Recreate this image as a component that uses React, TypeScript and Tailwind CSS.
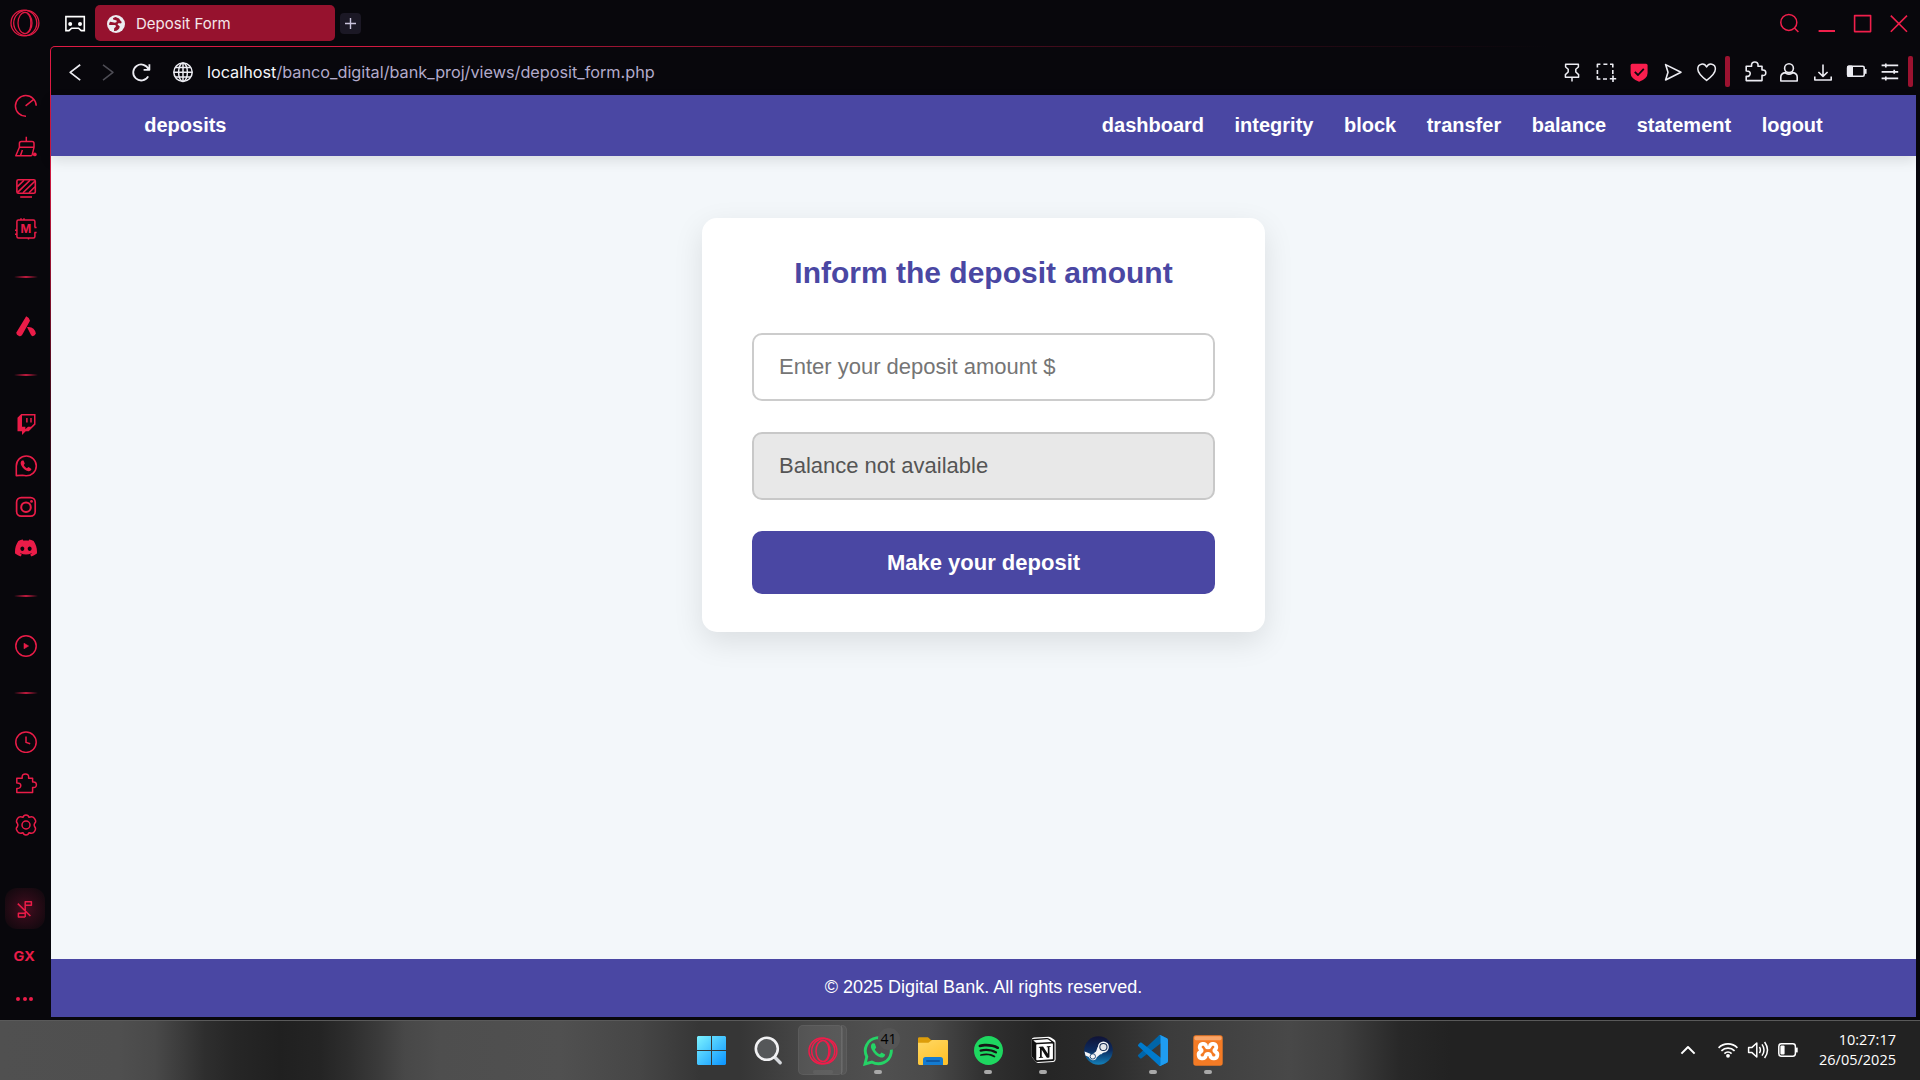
import React from "react";
import type { ReactNode } from "react";
import { SiTwitch, SiDiscord, SiSpotify, SiNotion } from "react-icons/si";

type IconProps = { children: ReactNode; size?: number; sw?: number; className?: string };

function Icon({ children, size = 24, sw = 1.5, className = "" }: IconProps) {
  return (
    <svg
      width={size}
      height={size}
      viewBox={`0 0 ${size} ${size}`}
      fill="none"
      stroke="currentColor"
      strokeWidth={sw}
      strokeLinejoin="round"
      className={`block shrink-0 ${className}`}
    >
      {children}
    </svg>
  );
}

function OperaLogo({ sw = 1.3 }: { sw?: number }) {
  return (
    <Icon size={30} sw={sw}>
      <circle cx="13.9" cy="15" r="12.9" />
      <circle cx="16.3" cy="15" r="12.6" />
      <ellipse cx="15" cy="15" rx="7" ry="10.6" />
      <path d="M17.5 5.5 C22 9 22 21 17.5 24.5" />
    </Icon>
  );
}

const PUZZLE =
  "M2.8 6.2 H8.2 C7.6 2.8 9.6 2 11.4 2 S15.2 2.8 14.6 6.2 H18.6 V10 C21.6 9.6 22.4 11 22.4 12.8 S21.4 16 18.6 15.4 V20.6 H2.8 V16.4 C5.6 16.6 6.8 15.4 6.8 13.6 S5.6 10.8 2.8 11 Z";

function Slot({ h, children }: { h: string; children: ReactNode }) {
  return <div className={`flex w-full shrink-0 items-center pl-[14px] ${h}`}>{children}</div>;
}

function Separator({ h }: { h: string }) {
  return (
    <Slot h={h}>
      <div className="h-[2px] w-6 rounded-full bg-[linear-gradient(90deg,transparent,#c01a3e_50%,transparent)]" />
    </Slot>
  );
}

function Sidebar() {
  return (
    <aside className="flex w-[50px] shrink-0 flex-col pt-[39px] text-[#ea1c48]">
      <Slot h="h-[41px]">
        <Icon>
          <path d="M12 22.3 A10.4 10.4 0 1 1 22.2 11.8 M11.6 11.9 L19.4 5.6" />
        </Icon>
      </Slot>
      <Slot h="h-[41px]">
        <Icon sw={1.5}>
          <path d="M12.3 1.7 V6.5 M5.4 12.3 V8.6 Q5.4 6.6 7.4 6.6 H18 Q20 6.6 20 8.6 V12.3 Z M5.4 12.3 L1.8 20.8 H16.6 Q17.8 20.8 18.3 19.4 L20 12.3 M8.4 15 L6.6 20.2" />
          <circle cx="20.8" cy="19.4" r="1.9" fill="currentColor" stroke="none" />
        </Icon>
      </Slot>
      <Slot h="h-[41px]">
        <Icon sw={1.6}>
          <rect x="2.9" y="3.7" width="18.4" height="13.6" rx="1.5" />
          <path d="M3.4 10.6 L10 4.2 M3.6 16.4 L16 4.2 M9 16.8 L20.8 5.2 M15 16.8 L21 10.8" />
          <path d="M6.2 21 H18" />
        </Icon>
      </Slot>
      <Slot h="h-[41px]">
        <Icon sw={1.5}>
          <path d="M20.9 10 V4.4 Q20.9 2.9 19.4 2.9 H4.4 Q2.9 2.9 2.9 4.4 V19.4 Q2.9 20.9 4.4 20.9 H19.4 Q20.9 20.9 20.9 19.4 V15.6" />
          <path d="M1 13.2 H3 M1 17.2 H3 M7 1.2 V3 M10 1.2 V3 M20.4 10.6 H22.6 M20.4 15.6 H22.6 M14.5 21 V22.6" />
          <text
            x="11.9"
            y="16"
            textAnchor="middle"
            fontFamily="Inter, sans-serif"
            fontWeight="700"
            fontSize="11.5"
            fill="currentColor"
            stroke="none"
          >
            M
          </text>
        </Icon>
      </Slot>
      <Separator h="h-[56px]" />
      <Slot h="h-[42px]">
        <Icon>
          <path
            d="M12.2 2.2 Q15.4 3.6 16 6.8 L8.4 20.4 Q7.2 22.8 5 22 Q2.4 21 2.2 18.8 Z M13 13 Q20.5 12 21.9 19.6 Q21 22 18.8 22.2 Q17.6 22 16.6 20.2 Z"
            fill="currentColor"
            stroke="none"
          />
        </Icon>
      </Slot>
      <Separator h="h-[56px]" />
      <Slot h="h-[42px]">
        <SiTwitch size={21} className="ml-[1.5px] block shrink-0" />
      </Slot>
      <Slot h="h-[42px]">
        <Icon sw={1.6}>
          <path d="M2.3 21.6 V12 A10 9.9 0 1 1 12 21.8 L8.5 21.2 Z" />
          <path
            d="M8 6.4 C6.6 7.2 6.2 9 7.2 11.2 C8.8 14.6 11.4 16.6 14.4 17.2 C16 17.4 17.2 16.4 17.4 15 L14.6 13 L12.8 14.2 C11.4 13.4 10.4 12.4 9.8 11 L10.8 9.6 L9.6 6.6 Z"
            fill="currentColor"
            stroke="none"
          />
        </Icon>
      </Slot>
      <Slot h="h-[40px]">
        <Icon sw={1.7}>
          <rect x="2.6" y="2.6" width="18.6" height="18.6" rx="4.6" />
          <circle cx="12" cy="12.2" r="4.8" strokeWidth="2" />
          <circle cx="17.5" cy="6.4" r="1.4" fill="currentColor" stroke="none" />
        </Icon>
      </Slot>
      <Slot h="h-[42px]">
        <SiDiscord size={22} className="ml-[1px] block shrink-0" />
      </Slot>
      <Separator h="h-[54px]" />
      <Slot h="h-[46px]">
        <Icon>
          <circle cx="12" cy="12" r="10.2" />
          <path d="M10 9.2 L14.6 12 L10 14.8 Z" fill="currentColor" strokeWidth="0.6" />
        </Icon>
      </Slot>
      <Separator h="h-[48px]" />
      <Slot h="h-[48px]">
        <Icon>
          <circle cx="12" cy="13.2" r="10.2" />
          <path d="M12 7.4 V13.4 L16.2 14.8" />
        </Icon>
      </Slot>
      <Slot h="h-[38px]">
        <Icon className="-mt-px">
          <path d={PUZZLE} />
        </Icon>
      </Slot>
      <Slot h="h-[44px]">
        <Icon>
          <path d="M12 1.9 C13.6 1.9 14.6 2.6 15 4.3 C17 3.6 19 3.4 20.4 5.4 C21.8 7.6 22.4 8.6 20.6 10.4 C20 11.4 20 12.6 20.6 13.6 C22.4 15.4 21.8 16.6 20.4 18.6 C19 20.6 17 20.4 15 19.7 C14.6 21.4 13.6 22.1 12 22.1 S9.4 21.4 9 19.7 C7 20.4 5 20.6 3.6 18.6 C2.2 16.4 1.6 15.4 3.4 13.6 C4 12.6 4 11.4 3.4 10.4 C1.6 8.6 2.2 7.4 3.6 5.4 C5 3.4 7 3.6 9 4.3 C9.4 2.6 10.4 1.9 12 1.9 Z" />
          <circle cx="12" cy="12" r="4" />
        </Icon>
      </Slot>
      <div className="mt-[41px] ml-[5px] flex h-[41px] w-10 shrink-0 items-center rounded-xl bg-[radial-gradient(circle,#4a0d20_0%,#2b0b17_40%,#0b080c_100%)] pt-[5px] pl-[8px]">
        <Icon sw={1.5}>
          <path d="M4.8 4.6 L17.4 17 M12.2 18 V2.8 H18.4 V6.2 H12.2 M12.2 14.2 H5.4 V18 H12.2" />
        </Icon>
      </div>
      <div className="mt-2 flex h-[41px] w-[49px] shrink-0 items-center justify-center">
        <span className="scale-x-115 font-[Inter,sans-serif] text-[12.5px] leading-none font-bold">GX</span>
      </div>
      <div className="flex h-[41px] w-[49px] shrink-0 items-center justify-center gap-[2.6px]">
        <i className="size-[4px] rounded-full bg-current" />
        <i className="size-[4px] rounded-full bg-current" />
        <i className="size-[4px] rounded-full bg-current" />
      </div>
    </aside>
  );
}

function TitleBar() {
  return (
    <header className="flex h-[46px] shrink-0 items-center pl-[10px] font-[Inter,sans-serif]">
      <div className="-mt-px text-[#e01a44]">
        <OperaLogo />
      </div>
      <Icon className="ml-[23px] text-white" sw={1.6}>
        <path d="M2.9 5.6 H21.3 V19.6 H18.2 L15.6 17.2 H8.6 L6 19.6 H2.9 Z" strokeLinejoin="miter" />
        <circle cx="7.2" cy="13" r="2" fill="currentColor" stroke="none" />
        <circle cx="17" cy="13" r="2" fill="currentColor" stroke="none" />
      </Icon>
      <div className="ml-2 flex h-9 w-60 items-center rounded-[5px] bg-[#96122e] pl-[11px]">
        <svg width="18" height="18" viewBox="0 0 18 18" className="ml-px mt-px block">
          <circle cx="9" cy="9" r="9" fill="#ececf0" />
          <path
            d="M8.6 2 C6.4 2.4 5.4 3.6 6.2 4.6 L9.6 5.4 C10.2 7 8.6 7.8 7 7.6 L3.2 6.8 C2.2 8 2 9 2.2 10 L7.6 10 C9.8 10.4 9 12.2 7.2 13 L7 16 C9.4 16.4 12.4 15 12.8 11.6 L10.6 9.6 C10.6 8.4 12 7.8 14 8.6 L14.8 7 C13.6 6.4 13 5 12 3.6 Z"
            fill="#96122e"
          />
        </svg>
        <span className="mt-px ml-[11px] text-[15px] leading-none text-[#f4e6ea]">Deposit Form</span>
      </div>
      <div className="ml-[5px] flex size-[21px] items-center justify-center rounded-[4px] bg-[#1b1825] text-[#c9c3dc]">
        <svg width="11" height="11" viewBox="0 0 11 11" stroke="currentColor" strokeWidth="1.4">
          <path d="M5.5 0 V11 M0 5.5 H11" />
        </svg>
      </div>
      <div className="ml-auto flex items-center gap-[12px] pr-[9.5px] text-[#f01f4b]">
        <Icon>
          <circle cx="9.8" cy="11.4" r="8" />
          <path d="M15.4 17 L19.4 21" />
        </Icon>
        <Icon sw={2}>
          <path d="M3.6 20 H20" />
        </Icon>
        <Icon sw={1.6}>
          <rect x="3.6" y="4.6" width="16" height="16" />
        </Icon>
        <Icon sw={1.6}>
          <path d="M3.8 4.6 L20 20.8 M20 4.6 L3.8 20.8" />
        </Icon>
      </div>
    </header>
  );
}

function Tool({ children, sw }: { children: ReactNode; sw?: number }) {
  return (
    <div className="flex w-[33.6px] justify-center pt-px">
      <Icon sw={sw}>{children}</Icon>
    </div>
  );
}

function AddressBar() {
  return (
    <div className="flex h-12 shrink-0 items-center pt-px pl-[13px] font-[Inter,sans-serif] text-[#ececf2]">
      <Icon sw={1.7}>
        <path d="M16.2 4.8 L6.2 12.4 L16.2 20.2" />
      </Icon>
      <Icon className="ml-2 text-[#4e4d55]" sw={1.5}>
        <path d="M7 4.8 L17 12.4 L7 20.2" />
      </Icon>
      <Icon className="ml-[9px]" sw={1.8}>
        <path d="M19.2 16.4 A8 8 0 1 1 19.6 9.4 M20.4 4.2 V9.8 H14.6" />
      </Icon>
      <Icon className="ml-[18px]" sw={1.5}>
        <circle cx="12" cy="12.2" r="9.2" />
        <ellipse cx="12" cy="12.2" rx="4.4" ry="9.2" />
        <path d="M12 3 V21.4 M2.8 12.2 H21.2 M4.4 7.4 H19.6 M4.4 17 H19.6" />
      </Icon>
      <div className="ml-3 pt-[2px] text-[16.24px] leading-none whitespace-nowrap text-[#b3abcb]">
        <span className="text-[#f6f6fa]">localhost</span>/banco_digital/bank_proj/views/deposit_form.php
      </div>
      <div className="ml-auto flex items-center pr-[7px]">
        <Tool>
          <path d="M5.6 4.2 H18.4 V7 L15.8 9.2 V12 L18.6 14.6 V17.2 H5.4 V14.6 L8.2 12 V9.2 L5.6 7 Z M12 17.2 V21.6" />
        </Tool>
        <Tool sw={1.6}>
          <path d="M4.4 7.4 V4.2 H7.4 M10.4 4.2 H14.4 M17 4.2 H19.8 V7.4 M19.8 10 V14 M4.4 10 V14 M4.4 16 V19 H7.4 M10 19 H14 M20 15.6 V22 M16.8 18.8 H23.2" />
        </Tool>
        <Tool>
          <path d="M3.6 5.4 Q3.6 3.8 5.2 3.8 H19 Q20.6 3.8 20.6 5.4 V13 Q20.6 18.6 12.1 21.8 Q3.6 18.6 3.6 13 Z" fill="#fa1e4e" stroke="none" />
          <path d="M7.8 11.8 L11 15 L16.8 8.8" stroke="#0a090d" strokeWidth="1.8" />
        </Tool>
        <Tool sw={1.6}>
          <path d="M4.6 4.6 L20 12.2 L4.6 20 L7 12.2 Z" />
        </Tool>
        <Tool sw={1.5}>
          <path d="M12.6 20.4 C7.6 16.6 3.8 13.2 3.8 9 C3.8 3.4 10.4 2.4 12.6 7 C14.8 2.4 21.4 3.4 21.4 9 C21.4 13.2 17.6 16.6 12.6 20.4 Z" />
        </Tool>
        <div className="ml-[2px] h-[31px] w-[5px] rounded-[2px] bg-[#9c1230]" />
        <div className="w-[9px]" />
        <Tool sw={1.6}>
          <path d={PUZZLE} transform="translate(-0.6 0)" />
        </Tool>
        <Tool sw={1.6}>
          <circle cx="12" cy="8.2" r="4.4" />
          <path d="M8.4 12.6 C5.2 13 3.8 14.4 3.8 17 V21 H20.2 V17 C20.2 14.4 18.8 13 15.6 12.6 C15 14.6 9 14.6 8.4 12.6 Z" />
        </Tool>
        <Tool sw={1.6}>
          <path d="M12 4.4 V16.4 M7.4 12 L12 16.4 L16.6 12 M3.8 16.6 V20 H20.2 V16.6" />
        </Tool>
        <Tool sw={1.6}>
          <rect x="2.6" y="6.2" width="16.6" height="10" rx="1.5" />
          <rect x="2" y="5.4" width="6" height="11.6" rx="1.5" fill="currentColor" stroke="none" />
          <path d="M20.4 9 V13.8" strokeWidth="2.4" />
        </Tool>
        <Tool sw={1.7}>
          <path d="M3.6 5.4 H20.2 M3.6 11.8 H20.2 M3.6 18.4 H20.2 M7.8 3.4 V7.4 M16.2 9.8 V13.8 M7.8 16.4 V20.4" />
        </Tool>
        <div className="ml-px h-[31px] w-[5px] rounded-[2px] bg-[#9c1230]" />
      </div>
    </div>
  );
}

const links = ["dashboard", "integrity", "block", "transfer", "balance", "statement", "logout"];

function BankPage() {
  return (
    <div className="mr-1 flex h-[922px] flex-col bg-[#f3f7fa] font-['Liberation_Sans',Arial,sans-serif]">
      <nav className="flex h-[61px] shrink-0 items-center justify-between bg-[#4a47a3] px-[93.25px] pb-[2px] text-[20px] font-bold text-white shadow-[0_5px_12px_rgba(0,0,0,0.1)]">
        <span>deposits</span>
        <ul className="flex gap-[30.5px]">
          {links.map((l) => (
            <li key={l}>{l}</li>
          ))}
        </ul>
      </nav>
      <main className="flex flex-1 justify-center pt-[62px]">
        <form className="h-[414px] w-[563px] rounded-[15px] bg-white px-[50px] pt-[37px] shadow-[0_10px_30px_rgba(0,0,0,0.1)]">
          <h1 className="text-center text-[30px] leading-[35px] font-bold text-[#4a47a3]">Inform the deposit amount</h1>
          <div className="mt-[43px] flex h-[68px] items-center rounded-[10px] border-2 border-[#ccc] pb-[2px] pl-[25px] text-[22px] text-[#757575]">
            Enter your deposit amount $
          </div>
          <div className="mt-[31px] flex h-[68px] items-center rounded-[10px] border-2 border-[#c8c8c8] bg-[#e8e8e8] pb-[2px] pl-[25px] text-[22px] text-[#555]">
            Balance not available
          </div>
          <button
            type="button"
            className="mt-[31px] flex h-[63px] w-full items-center justify-center rounded-[10px] bg-[#4a47a3] text-[22px] font-bold text-white"
          >
            Make your deposit
          </button>
        </form>
      </main>
      <footer className="flex h-[58px] shrink-0 items-center justify-center bg-[#4a47a3] pb-[2px] text-[18px] text-white">
        © 2025 Digital Bank. All rights reserved.
      </footer>
    </div>
  );
}

function Task({ children, running = false }: { children: ReactNode; running?: boolean }) {
  return (
    <div className="relative flex h-full w-[55px] items-center justify-center">
      {children}
      {running && <i className="absolute bottom-[6px] left-[23.5px] h-1 w-2 rounded-full bg-[#a9a9a9]" />}
    </div>
  );
}

function Taskbar() {
  return (
    <div className="flex h-[60px] shrink-0 items-center border-t border-[#5a5a5a] bg-[linear-gradient(90deg,#505050_0px,#4f4f4f_120px,#494949_155px,#3c3c3c_180px,#2e2e2e_205px,#262626_235px,#202020_280px,#242424_320px,#2e2e2e_350px,#3b3b3b_380px,#484848_405px,#4e4e4e_440px,#505050_560px,#464646_640px,#363636_700px,#363636_740px,#484848_810px,#505050_880px,#4a4a4a_930px,#303030_985px,#252525_1040px,#2a2a2a_1100px,#3c3c3c_1170px,#484848_1290px,#404040_1340px,#282828_1400px,#222_1450px,#222_1920px)] pl-[684px] text-white">
      <Task>
        <svg width="29" height="29" viewBox="0 0 29 29">
          <defs>
            <linearGradient id="win" x1="0" y1="0" x2="1" y2="1">
              <stop offset="0" stopColor="#7df3ff" />
              <stop offset="1" stopColor="#0a93ff" />
            </linearGradient>
          </defs>
          <path d="M1 0 H14 V14 H0 V1 Z M15 0 H28 L29 1 V14 H15 Z M0 15 H14 V29 H1 L0 28 Z M15 15 H29 V28 L28 29 H15 Z" fill="url(#win)" />
        </svg>
      </Task>
      <div className="w-[1.5px]" />
      <Task>
        <svg width="30" height="30" viewBox="0 0 30 30" fill="none">
          <path d="M21 20.5 L27.2 26.8" stroke="#d5d8dc" strokeWidth="3.4" strokeLinecap="round" />
          <circle cx="13.8" cy="12.8" r="11" fill="#555759" stroke="#f1f1f3" strokeWidth="2.6" />
        </svg>
      </Task>
      <Task>
        <div className="absolute top-1 left-[2px] h-[50px] w-[45px] rounded-[5px] border border-r-0 border-white/5 bg-white/8" />
        <div className="absolute top-1 left-[45px] h-[50px] w-[6px] rounded-r-[5px] border border-white/5 bg-white/5" />
        <div className="absolute bottom-[6px] left-[17px] h-1 w-5 rounded-full bg-white/5" />
        <div className="relative text-[#f01c4a]">
          <OperaLogo sw={1.5} />
        </div>
      </Task>
      <Task running>
        <svg width="30" height="31" viewBox="0 0 30 31" fill="none" stroke="#25d366" strokeWidth="2.9">
          <path d="M2 29 L3.8 21.8 A13 13 0 1 1 8.8 27 Z" strokeLinejoin="miter" />
          <path
            d="M9.6 8.2 C7.8 9.4 7.4 11.8 8.6 14.2 C10.6 18.2 13.6 21.2 17.6 22.4 C20 23 22 21.4 22.2 19.4 L18.6 17.4 L16.8 19.2 C14.6 18.2 13 16.6 11.8 14.4 L13.2 12.6 L11.8 8.6 Z"
            fill="#25d366"
            stroke="none"
          />
        </svg>
        <span className="absolute top-[7px] left-[27px] flex size-[22px] items-center justify-center rounded-full bg-[#555] font-['Open_Sans',sans-serif] text-[14px] leading-none text-black">
          41
        </span>
      </Task>
      <Task>
        <svg width="30" height="30" viewBox="0 0 30 30">
          <defs>
            <linearGradient id="fold" x1="0" y1="0" x2="0.6" y2="1">
              <stop offset="0" stopColor="#ffd865" />
              <stop offset="1" stopColor="#ffc22c" />
            </linearGradient>
          </defs>
          <path d="M0 2.6 Q0 1.2 1.4 1.2 H10 L13 4 H28.6 Q30 4 30 5.4 V10 H0 Z" fill="#dd9d0a" />
          <path d="M0 6.8 H10.4 L14 4 H28.6 Q30 4 30 5.4 V27.6 Q30 29 28.6 29 H1.4 Q0 29 0 27.6 Z" fill="url(#fold)" />
          <path d="M5 29 V23.6 Q5 21 7.6 21 H22.4 Q25 21 25 23.6 V29 Z" fill="#147bd1" />
          <rect x="8" y="24.2" width="14" height="1.5" rx="0.7" fill="#0d4f95" />
        </svg>
      </Task>
      <Task running>
        <div className="relative flex size-[29px] items-center justify-center rounded-full text-[#1ed760]">
          <div className="absolute size-6 rounded-full bg-[#161616]" />
          <SiSpotify size={29} className="relative block" />
        </div>
      </Task>
      <Task running>
        <div className="relative -mt-px flex size-[27px] items-center justify-center">
          <svg width="27" height="28" viewBox="0 0 27 28" className="absolute">
            <path
              d="M1.6 4.2 Q1.6 1.8 4 1.6 L18.6 0.8 Q20 0.8 21 1.4 L24.4 3.8 Q25.6 4.6 25.6 6.2 V23.4 Q25.6 25.8 23.2 26 L8.4 26.9 Q6.6 27 5.6 25.6 L2.2 21.4 Q1.6 20.6 1.6 19.4 Z"
              fill="#fff"
            />
          </svg>
          <SiNotion size={24} className="relative block text-[#111]" />
        </div>
      </Task>
      <Task>
        <svg width="29" height="29" viewBox="0 0 29 29">
          <defs>
            <linearGradient id="steam" x1="0" y1="0" x2="0" y2="1">
              <stop offset="0" stopColor="#101236" />
              <stop offset="0.5" stopColor="#0c2c60" />
              <stop offset="1" stopColor="#1381bb" />
            </linearGradient>
          </defs>
          <circle cx="14.5" cy="14.5" r="14.3" fill="url(#steam)" />
          <path d="M0.6 15.6 L8 18.6 L13.4 14.6 L16.6 18 L12.8 21.2 Q12 24.4 8.6 24.2 Q5.6 23.8 4.8 21 L1.4 19.4 Z" fill="#f4f4f6" />
          <circle cx="19.4" cy="11" r="5.5" fill="#f4f4f6" />
          <path d="M13.6 11 L12 15.8 L17 18.6 L20 16 Z" fill="#f4f4f6" />
          <circle cx="19.4" cy="11" r="4.1" fill="#14284f" />
          <circle cx="19.4" cy="11" r="3.1" fill="#e4e6ea" />
          <circle cx="8.8" cy="20.4" r="2.7" fill="none" stroke="#14406f" strokeWidth="0.9" />
        </svg>
      </Task>
      <Task running>
        <svg width="30" height="31" viewBox="0 0 100 100" preserveAspectRatio="none">
          <path
            d="M96.46 10.8 75.86.87a6.23 6.23 0 0 0-7.1 1.2L1.3 63.6a4.17 4.17 0 0 0 0 6.15l5.5 5.01c1.5 1.36 3.7 1.46 5.31.24L93.3 13.4c2.7-2.1 6.7-.1 6.7 3.3v-.3a6.25 6.25 0 0 0-3.54-5.6Z"
            fill="#0065a9"
          />
          <path
            d="M96.46 89.2 75.86 99.1a6.23 6.23 0 0 1-7.1-1.2L1.3 36.4a4.17 4.17 0 0 1 0-6.15l5.5-5.01c1.5-1.36 3.7-1.46 5.31-.24L93.3 86.6c2.7 2.1 6.7.1 6.7-3.3v.3a6.25 6.25 0 0 1-3.54 5.6Z"
            fill="#007acc"
          />
          <path
            d="M75.86 99.1a6.23 6.23 0 0 1-7.1-1.2c2.3 2.3 6.24.66 6.24-2.6V4.66c0-3.26-3.94-4.9-6.24-2.6a6.23 6.23 0 0 1 7.1-1.2l20.6 9.9A6.25 6.25 0 0 1 100 16.4v67.2c0 2.4-1.37 4.6-3.54 5.63Z"
            fill="#1f9cf0"
          />
        </svg>
      </Task>
      <Task running>
        <svg width="30" height="31" viewBox="0 0 30 31">
          <rect x="0.3" y="0.3" width="29.4" height="30.4" rx="2.6" fill="#f47b25" />
          <rect x="1.4" y="1.2" width="27.2" height="4" rx="1.6" fill="#f9a568" />
          <path
            d="M9.4 8.9 H10.6 Q12.4 9 13 10.8 Q13.6 12.4 15 12.4 Q16.4 12.4 17 10.8 Q17.6 9 19.4 8.9 H20.6 A3.1 3.1 0 0 1 21.8 14.6 Q20.8 15.6 22 16.6 A3.5 3.5 0 0 1 20.6 23.4 Q17.6 23.4 17.2 20.6 Q16.8 19 15 19 Q13.2 19 12.8 20.6 Q12.4 23.4 9.4 23.4 A3.5 3.5 0 0 1 8 16.6 Q9.2 15.6 8.2 14.6 A3.1 3.1 0 0 1 9.4 8.9 Z"
            fill="none"
            stroke="#fff"
            strokeWidth="3.8"
            strokeLinejoin="round"
          />
        </svg>
      </Task>
      <div className="ml-auto flex h-full items-center pr-6 pb-[2px]">
        <Icon sw={2}>
          <path d="M5.4 15.6 L12 9 L18.6 15.6" />
        </Icon>
        <Icon className="ml-[16.5px]" sw={1.7}>
          <path d="M2.6 9.8 A13.4 13.4 0 0 1 21.4 9.8 M5.4 12.8 A9.4 9.4 0 0 1 18.6 12.8 M8.4 15.6 A5.2 5.2 0 0 1 15.6 15.6" />
          <circle cx="12" cy="17.8" r="1.9" fill="currentColor" stroke="none" />
        </Icon>
        <Icon className="ml-[6px]" sw={1.5}>
          <path d="M2.6 9.4 H6 L10.8 5 V19 L6 14.6 H2.6 Z M13.4 9 Q15.4 12 13.4 15.2 M16 6.4 Q20 12 16 17.6 M18.6 4 Q24.4 12 18.6 20" />
        </Icon>
        <Icon className="ml-[6px]" sw={1.5}>
          <rect x="2.8" y="5.8" width="16.6" height="12.4" rx="2.6" />
          <rect x="4.4" y="7.4" width="4.2" height="9.2" rx="1" fill="currentColor" stroke="none" />
          <path d="M20.6 9.6 V14.4" strokeWidth="2.2" />
        </Icon>
        <div className="ml-[18px] w-[78px] text-right font-['Open_Sans',sans-serif] text-[14.5px] leading-5 whitespace-nowrap">
          <div>10:27:17</div>
          <div>26/05/2025</div>
        </div>
      </div>
    </div>
  );
}

export default function App() {
  return (
    <div className="flex h-[1080px] w-[1920px] flex-col overflow-hidden bg-[#08070c]">
      <TitleBar />
      <div className="flex h-[974px] shrink-0">
        <Sidebar />
        <div className="flex flex-1 rounded-tl-[5px] bg-[radial-gradient(ellipse_1500px_560px_at_0_0,#e01a44_0%,#d01940_22%,#4d0c1e_60%,#08070c_100%)] pt-px pl-px">
          <div className="flex flex-1 flex-col rounded-tl-[4px] bg-[#08070c]">
            <AddressBar />
            <BankPage />
          </div>
        </div>
      </div>
      <Taskbar />
    </div>
  );
}
